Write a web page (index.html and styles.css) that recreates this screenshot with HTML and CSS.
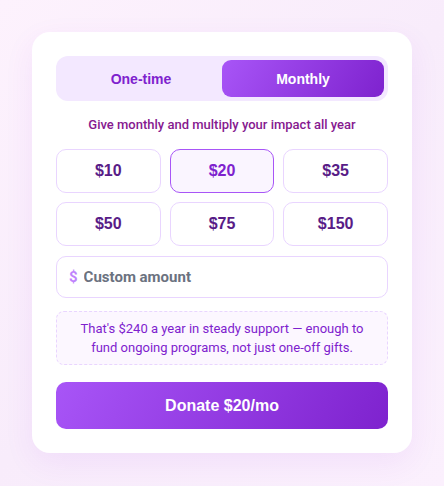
FILE: index.html
```html
<!DOCTYPE html>
<html>
<head>
  <meta charset="UTF-8">
  <title>Donate</title>
  <link rel="stylesheet" href="styles.css">
</head>
<body>
  <div class="card">
    <div class="toggle">
      <button class="toggle-btn">One-time</button>
      <button class="toggle-btn active">Monthly</button>
    </div>

    <p class="tagline">Give monthly and multiply your impact all year</p>

    <div class="amounts">
      <button class="amount">$10</button>
      <button class="amount selected">$20</button>
      <button class="amount">$35</button>
      <button class="amount">$50</button>
      <button class="amount">$75</button>
      <button class="amount">$150</button>
    </div>

    <label class="custom">
      <span class="custom-sign">$</span>
      <input class="custom-input" type="text" placeholder="Custom amount">
    </label>

    <div class="impact">
      That's $240 a year in steady support — enough to fund ongoing programs, not just one-off gifts.
    </div>

    <button class="donate">Donate <strong>$20/mo</strong></button>
  </div>
</body>
</html>
```

FILE: styles.css
```css
body {
  margin: 0;
  padding: 32px;
  min-height: 486px;
  box-sizing: border-box;
  font-family: Roboto, "Liberation Sans", sans-serif;
  background: linear-gradient(135deg, #fdf2fd 0%, #f8ecfb 50%, #fbf0fd 100%);
}
.card {
  width: 380px;
  box-sizing: border-box;
  background-color: white;
  border-radius: 18px;
  padding: 24px;
  box-shadow: 0 10px 30px rgba(147, 51, 234, 0.08);
}
button {
  font-family: "Liberation Sans", Arial, sans-serif;
  cursor: pointer;
}
.toggle {
  display: grid;
  grid-template-columns: 1fr 1fr;
  padding: 4px;
  background-color: #f3e8ff;
  border-radius: 12px;
}
.toggle-btn {
  height: 37px;
  border: none;
  border-radius: 9px;
  background: transparent;
  color: #7e22ce;
  font-size: 14px;
  font-weight: bold;
}
.toggle-btn.active {
  background: linear-gradient(120deg, #a855f7, #7e22ce);
  color: white;
}
.tagline {
  margin: 15px 0 0;
  text-align: center;
  font-size: 13px;
  font-weight: 500;
  line-height: 18px;
  color: #86198f;
}
.amounts {
  display: grid;
  grid-template-columns: repeat(3, 1fr);
  gap: 9px;
  margin-top: 15px;
}
.amount {
  height: 44px;
  border: 1px solid #e9d5ff;
  border-radius: 10px;
  background-color: white;
  color: #581c87;
  font-size: 16px;
  font-weight: bold;
}
.amount.selected {
  background-color: #faf5ff;
  border-color: #a855f7;
  color: #7e22ce;
}
.custom {
  display: flex;
  align-items: center;
  gap: 6px;
  height: 42px;
  box-sizing: border-box;
  margin-top: 10px;
  padding: 0 12px;
  border: 1px solid #e9d5ff;
  border-radius: 10px;
}
.custom-sign {
  color: #c084fc;
  font-weight: bold;
  font-size: 15px;
}
.custom-input {
  flex: 1;
  border: none;
  outline: none;
  padding: 0;
  font-family: Roboto, sans-serif;
  font-size: 15px;
  font-weight: bold;
  color: #4b5563;
  background: transparent;
}
.custom-input::placeholder {
  color: #6b7280;
}
.impact {
  margin-top: 13px;
  padding: 7px 16px;
  border: 1px dashed #e9d5ff;
  border-radius: 8px;
  background-color: #fcf7ff;
  text-align: center;
  font-size: 13px;
  line-height: 19px;
  color: #7e22ce;
}
.donate {
  display: block;
  width: 100%;
  height: 47px;
  margin-top: 17px;
  border: none;
  border-radius: 10px;
  background: linear-gradient(120deg, #a855f7, #7e22ce);
  color: white;
  font-size: 16px;
  font-weight: bold;
}
```
